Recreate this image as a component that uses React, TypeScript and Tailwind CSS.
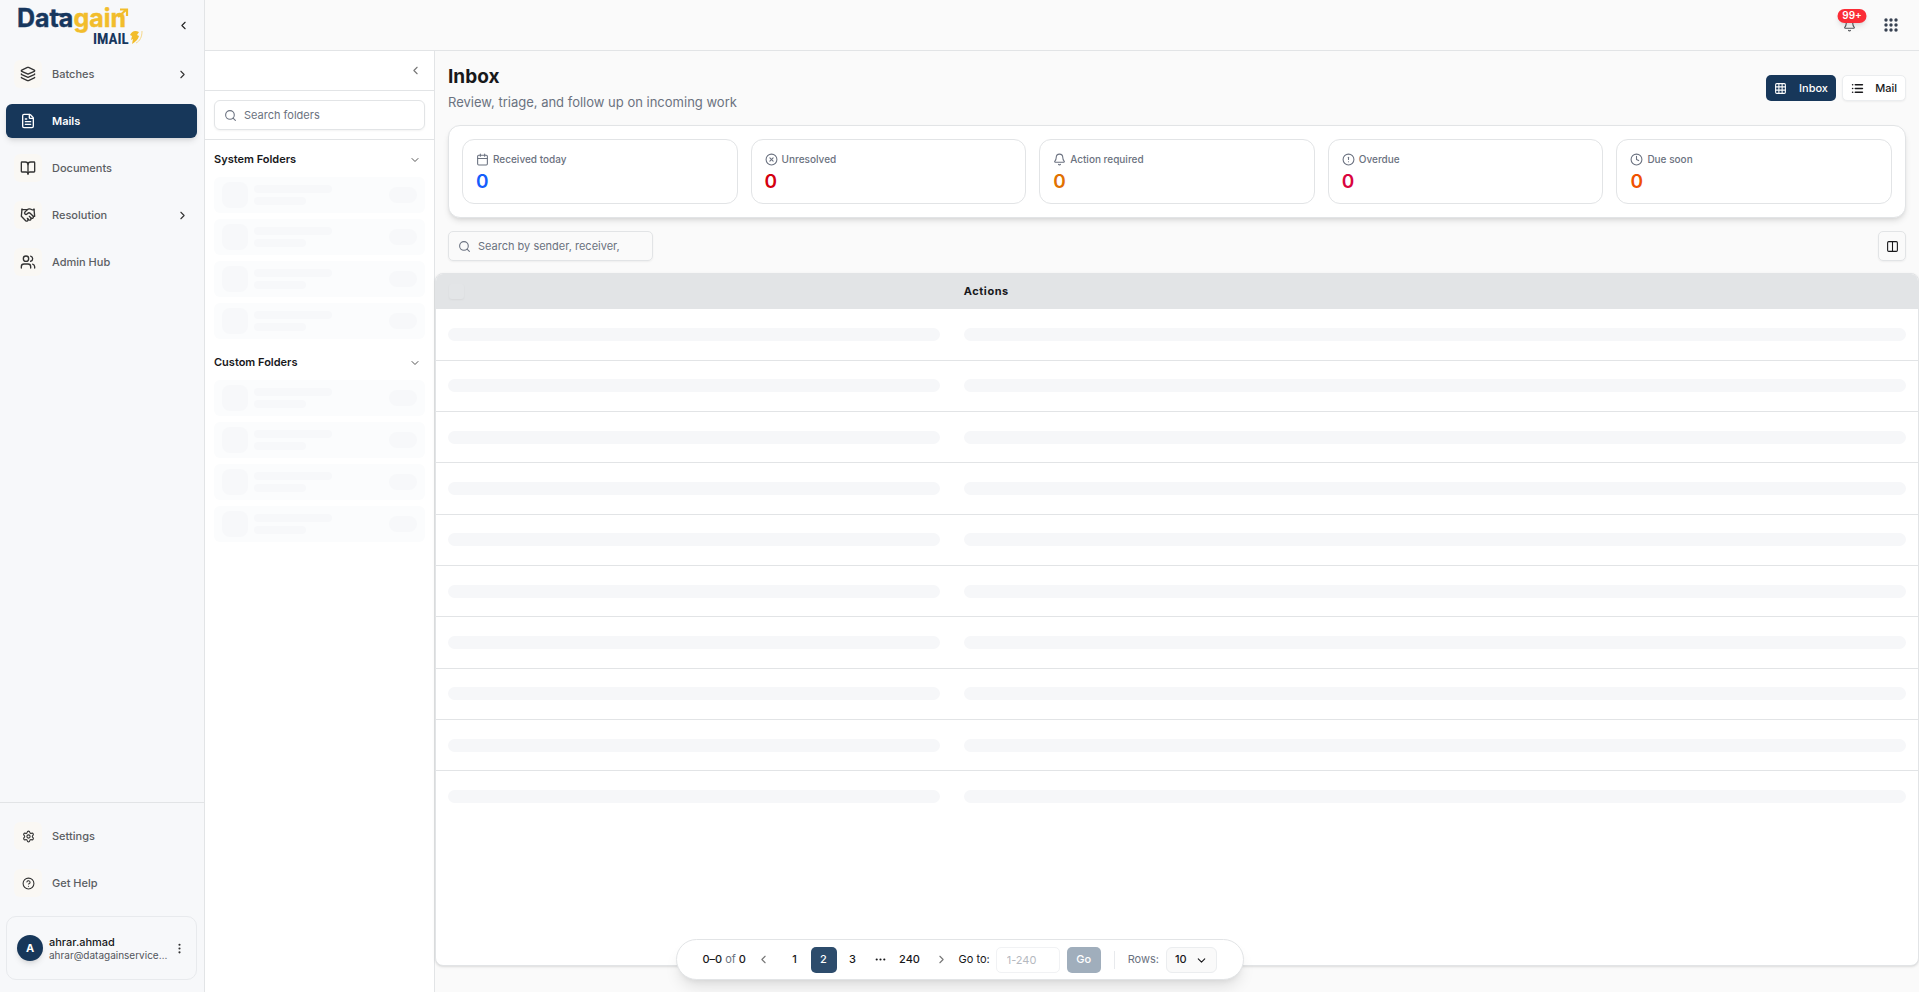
import React from 'react';
import {
  Bell,
  BookOpen,
  Calendar,
  ChevronDown,
  ChevronLeft,
  ChevronRight,
  CircleAlert,
  CircleQuestionMark,
  CircleX,
  Clock,
  Columns2,
  Ellipsis,
  EllipsisVertical,
  FileText,
  Grid3x3,
  Handshake,
  Layers,
  List,
  Search,
  Settings,
  Users,
  type LucideIcon,
} from 'lucide-react';

interface NavEntry {
  label: string;
  icon: LucideIcon;
  active?: boolean;
  expandable?: boolean;
  small?: boolean;
}

const mainNav: NavEntry[] = [
  { label: 'Batches', icon: Layers, expandable: true },
  { label: 'Mails', icon: FileText, active: true },
  { label: 'Documents', icon: BookOpen },
  { label: 'Resolution', icon: Handshake, expandable: true },
  { label: 'Admin Hub', icon: Users },
];

const footerNav: NavEntry[] = [
  { label: 'Settings', icon: Settings, small: true },
  { label: 'Get Help', icon: CircleQuestionMark, small: true },
];

const stats = [
  { label: 'Received today', icon: Calendar, color: 'text-[#155dfc]' },
  { label: 'Unresolved', icon: CircleX, color: 'text-[#d4000f]' },
  { label: 'Action required', icon: Bell, color: 'text-[#e17100]' },
  { label: 'Overdue', icon: CircleAlert, color: 'text-[#d9043f]' },
  { label: 'Due soon', icon: Clock, color: 'text-[#f05100]' },
];

const rows = Array.from({ length: 10 }, (_, i) => i);

const Logo: React.FC = () => (
  <svg width="130" height="50" viewBox="0 0 130 50" className="overflow-visible" role="img" aria-label="Datagain IMAIL">
    <text x="0" y="27" fontFamily="Inter, sans-serif" fontWeight="700" fontSize="25" fill="#17375e" stroke="#17375e" strokeWidth="0.4">
      Data
      <tspan fill="#f2bd2c" stroke="#f2bd2c">gain</tspan>
    </text>
    <path d="M36 14.5 H50" stroke="#17375e" strokeWidth="2.4" />
    <path d="M101 17 L109 10 M103 9.5 H110 V16" fill="none" stroke="#f2bd2c" strokeWidth="2.2" />
    <text x="76" y="44" fontFamily="'Roboto Condensed', Roboto, sans-serif" fontWeight="700" fontSize="15" fill="#17375e">
      IMAIL
    </text>
    <path d="M113 35c2-4 5-5 9-3l-2 3 2 1c-1 4-4 6-7 8l1-5-2 1 1-4z" fill="#f2bd2c" />
    <path d="M119 43c4-2 6-6 6-12" fill="none" stroke="#f6d98a" strokeWidth="1" />
  </svg>
);

const NavItem: React.FC<{ entry: NavEntry }> = ({ entry }) => {
  const Icon = entry.icon;
  return (
    <li>
      <a
        href="#"
        aria-current={entry.active ? 'page' : undefined}
        className={
          entry.active
            ? 'flex h-[34px] items-center rounded-md bg-[#17375a] px-2 text-[11px] font-semibold text-white shadow-md'
            : 'flex h-[34px] items-center rounded-md px-2 text-[11px] font-medium text-[#5b5e63]'
        }
      >
        <span
          className={
            entry.active
              ? 'flex size-7 items-center justify-center'
              : 'flex size-7 items-center justify-center rounded-md bg-[#faf8f4] text-[#333]'
          }
        >
          <Icon size={entry.small ? 13 : 16} />
        </span>
        <span className="ml-[10px] flex-1">{entry.label}</span>
        {entry.expandable && <ChevronRight size={13} className="text-[#333]" />}
      </a>
    </li>
  );
};

const FolderGroup: React.FC<{ title: string }> = ({ title }) => (
  <section>
    <button type="button" className="flex h-[37px] w-full items-center justify-between pt-[2px] pr-1 text-[11px] font-semibold text-[#18181b]">
      {title}
      <ChevronDown size={12} className="text-[#555]" />
    </button>
    <div className="flex flex-col gap-[6px]">
      {[0, 1, 2, 3].map((i) => (
        <div key={i} className="flex h-9 items-center rounded-md bg-[#fbfcfd] px-2">
          <div className="size-[26px] rounded-lg bg-[#f7f8fa]" />
          <div className="ml-[6px] flex flex-1 flex-col gap-1">
            <div className="h-2 w-[78px] rounded-sm bg-[#f7f8fa]" />
            <div className="h-2 w-[52px] rounded-sm bg-[#f7f8fa]" />
          </div>
          <div className="h-4 w-7 rounded-full bg-[#f7f8fa]" />
        </div>
      ))}
    </div>
  </section>
);

const Sidebar: React.FC = () => (
  <aside className="flex w-[205px] shrink-0 flex-col border-r border-[#e2e4e6] bg-[#f7f8fa]">
    <div className="flex h-[50px] items-center justify-between pr-[14px] pl-[17px]">
      <Logo />
      <button type="button" aria-label="Collapse sidebar">
        <ChevronLeft size={13} className="text-[#222]" />
      </button>
    </div>
    <nav className="flex-1 pt-[7px] pr-[7px] pl-[6px]">
      <ul className="flex flex-col gap-[13px]">
        {mainNav.map((entry) => (
          <NavItem key={entry.label} entry={entry} />
        ))}
      </ul>
    </nav>
    <div className="border-t border-[#e2e4e6] pt-4 pr-[7px] pb-3 pl-[6px]">
      <ul className="flex flex-col gap-[13px]">
        {footerNav.map((entry) => (
          <NavItem key={entry.label} entry={entry} />
        ))}
      </ul>
      <div className="mt-4 flex h-16 items-center rounded-[10px] border border-[#e8eaed] px-[10px]">
        <span className="flex size-[26px] shrink-0 items-center justify-center rounded-full bg-[#17375a] text-[11px] font-bold text-white shadow-md">
          A
        </span>
        <div className="ml-[6px] flex-1">
          <p className="text-[11px] leading-[14px] font-medium text-[#18181b]">ahrar.ahmad</p>
          <p className="text-[10px] leading-[13px] text-[#52555a]">ahrar@datagainservice…</p>
        </div>
        <button type="button" aria-label="Account menu">
          <EllipsisVertical size={13} className="text-[#333]" />
        </button>
      </div>
    </div>
  </aside>
);

const FolderPanel: React.FC = () => (
  <aside className="w-[230px] shrink-0 border-r border-[#e2e4e6] bg-white">
    <div className="flex h-10 items-center justify-end border-b border-[#e2e4e6] pr-3">
      <button type="button" aria-label="Collapse folders">
        <ChevronLeft size={13} className="text-[#777]" />
      </button>
    </div>
    <div className="border-b border-[#e2e4e6] px-[9px] py-[9px]">
      <label className="flex h-[30px] items-center rounded-md border border-[#e2e4e6] px-[9px] shadow-xs">
        <Search size={13} className="shrink-0 text-[#6b7280]" />
        <input
          type="text"
          aria-label="Search folders"
          placeholder="Search folders"
          className="ml-[7px] w-full min-w-0 bg-transparent text-[11px] outline-none placeholder:text-[#6b7280]"
        />
      </label>
    </div>
    <div className="flex flex-col gap-1 px-[9px]">
      <FolderGroup title="System Folders" />
      <FolderGroup title="Custom Folders" />
    </div>
  </aside>
);

const AppsIcon: React.FC = () => (
  <svg width="14" height="14" viewBox="0 0 14 14" fill="#374151" aria-hidden="true">
    {[2, 7, 12].map((y) => [2, 7, 12].map((x) => <circle key={`${x}-${y}`} cx={x} cy={y} r="1.7" />))}
  </svg>
);

const TopBar: React.FC = () => (
  <header className="flex h-[51px] shrink-0 items-center justify-end gap-7 border-b border-[#e2e4e6] bg-[#fafafa] pr-[21px]">
    <button type="button" aria-label="Notifications" className="relative">
      <Bell size={13} className="text-[#52555a]" />
      <span className="absolute -top-[10px] left-[9px] flex h-[14px] w-[29px] -translate-x-1/2 items-center justify-center rounded-full bg-[#fb2c36] text-[10px] font-semibold text-white shadow-md">
        99+
      </span>
    </button>
    <button type="button" aria-label="Apps">
      <AppsIcon />
    </button>
  </header>
);

const Pagination: React.FC = () => (
  <nav
    aria-label="Pagination"
    className="absolute bottom-3 left-1/2 flex h-[41px] w-[568px] -translate-x-1/2 items-center rounded-full border border-[#e2e4e6] bg-white pl-[26px] text-[11px] font-medium text-[#18181b] shadow-lg"
  >
    <p className="w-[45px] whitespace-nowrap">
      0–0 <span className="font-normal text-[#6b7280]">of</span> 0
    </p>
    <button type="button" aria-label="Previous page" className="flex w-8 justify-center">
      <ChevronLeft size={13} className="text-[#777]" />
    </button>
    <button type="button" className="ml-[2px] h-[26px] w-[26px] text-center">1</button>
    <button type="button" aria-current="page" className="ml-[3px] h-[26px] w-[26px] rounded-[5px] bg-[#2d4c6c] text-white">2</button>
    <button type="button" className="ml-[3px] h-[26px] w-[26px]">3</button>
    <span className="flex w-[30px] justify-center">
      <Ellipsis size={13} />
    </span>
    <button type="button" className="h-[26px] w-[28px]">240</button>
    <button type="button" aria-label="Next page" className="flex w-[35px] justify-center">
      <ChevronRight size={13} className="text-[#777]" />
    </button>
    <label htmlFor="goto" className="font-normal">Go to:</label>
    <input
      id="goto"
      type="text"
      placeholder="1-240"
      className="ml-[6px] h-[26px] w-16 rounded-[5px] border border-[#f1f2f4] px-[10px] text-[11px] font-normal outline-none placeholder:text-[#b5b9c0]"
    />
    <button type="button" className="ml-[7px] h-[26px] w-[34px] rounded-[5px] bg-[#a0aebc] text-white">Go</button>
    <span className="ml-[13px] h-[18px] w-px bg-[#e8eaed]" />
    <label htmlFor="rows" className="ml-[13px] font-normal text-[#6b7280]">Rows:</label>
    <div className="relative ml-[7px]">
      <select id="rows" defaultValue="10" className="h-[26px] w-[51px] appearance-none rounded-md border border-[#ebedef] bg-[#fafafa] pl-2 font-medium">
        <option>10</option>
        <option>20</option>
        <option>50</option>
      </select>
      <ChevronDown size={13} className="pointer-events-none absolute top-[7px] right-[9px]" />
    </div>
  </nav>
);

const Inbox: React.FC = () => (
  <main className="flex min-w-0 flex-1 flex-col bg-[#fafafa] pb-[26px]">
    <div className="flex items-center justify-between px-[13px] pt-[13px]">
      <div>
        <h1 className="text-[19px] leading-[26px] font-bold text-[#18181b]">Inbox</h1>
        <p className="mt-[2px] text-[13px] leading-5 text-[#6b7280]">Review, triage, and follow up on incoming work</p>
      </div>
      <div className="flex gap-[6px] text-[11px] font-medium">
        <button type="button" className="flex h-[26px] w-[70px] items-center justify-between rounded-[5px] bg-[#17375a] px-2 text-white">
          <Grid3x3 size={13} />
          Inbox
        </button>
        <button type="button" className="flex h-[26px] w-[64px] items-center justify-between rounded-[5px] border border-[#ebedef] bg-white px-2 text-[#18181b] shadow-xs">
          <List size={13} strokeWidth={3} />
          Mail
        </button>
      </div>
    </div>
    <div className="mx-[13px] mt-[13px] grid grid-cols-5 gap-[13px] rounded-xl border border-[#e2e4e6] bg-white p-[13px] shadow-md">
      {stats.map(({ label, icon: Icon, color }) => (
        <div key={label} className="h-[65px] rounded-xl border border-[#e2e4e6] px-[13px] pt-3">
          <p className="flex items-center gap-1 text-[10px] leading-[14px] font-medium text-[#6b7280]">
            <Icon size={13} />
            {label}
          </p>
          <p className={`mt-[3px] text-[19px] leading-[26px] font-semibold ${color}`}>0</p>
        </div>
      ))}
    </div>
    <div className="flex items-center justify-between px-[13px] pt-[13px] pb-3">
      <label className="flex h-[30px] w-[205px] items-center rounded-[5px] border border-[#e2e4e6] pr-8 pl-[9px] shadow-xs">
        <Search size={13} className="shrink-0 text-[#6b7280]" />
        <input
          type="text"
          aria-label="Search mail"
          placeholder="Search by sender, receiver, subject"
          className="ml-[7px] w-full min-w-0 bg-transparent text-[11px] outline-none placeholder:text-[#6b7280]"
        />
      </label>
      <button
        type="button"
        aria-label="Columns"
        className="flex h-[30px] w-7 items-center justify-center rounded-[5px] border border-[#e2e4e6] text-[#18181b] shadow-xs"
      >
        <Columns2 size={13} />
      </button>
    </div>
    <div className="flex-1 overflow-hidden rounded-lg border border-[#e2e4e6] bg-white shadow-sm">
      <table className="h-[548px] w-full table-fixed border-collapse">
        <colgroup>
          <col className="w-[34.8%]" />
          <col />
        </colgroup>
        <thead>
          <tr className="h-[35px] bg-[#e2e4e6]">
            <th className="px-[13px] text-left">
              <input
                type="checkbox"
                aria-label="Select all"
                className="block size-[15px] appearance-none rounded-[3px] bg-[#e3e5e7] shadow-xs"
              />
            </th>
            <th className="px-3 text-left text-[11px] font-bold tracking-wider text-[#18181b]">Actions</th>
          </tr>
        </thead>
        <tbody>
          {rows.map((row) => (
            <tr key={row} className="h-[51px] border-b border-[#e2e4e6] last:border-b-0">
              <td className="px-3">
                <div className="h-[13px] rounded-full bg-[#f6f7f9]" />
              </td>
              <td className="px-3">
                <div className="h-[13px] rounded-full bg-[#f6f7f9]" />
              </td>
            </tr>
          ))}
        </tbody>
      </table>
    </div>
  </main>
);

export default function App() {
  return (
    <div className="relative flex min-h-screen bg-[#fafafa] font-['Inter',sans-serif]">
      <Sidebar />
      <div className="flex min-w-0 flex-1 flex-col">
        <TopBar />
        <div className="flex flex-1">
          <FolderPanel />
          <Inbox />
        </div>
      </div>
      <Pagination />
    </div>
  );
}
